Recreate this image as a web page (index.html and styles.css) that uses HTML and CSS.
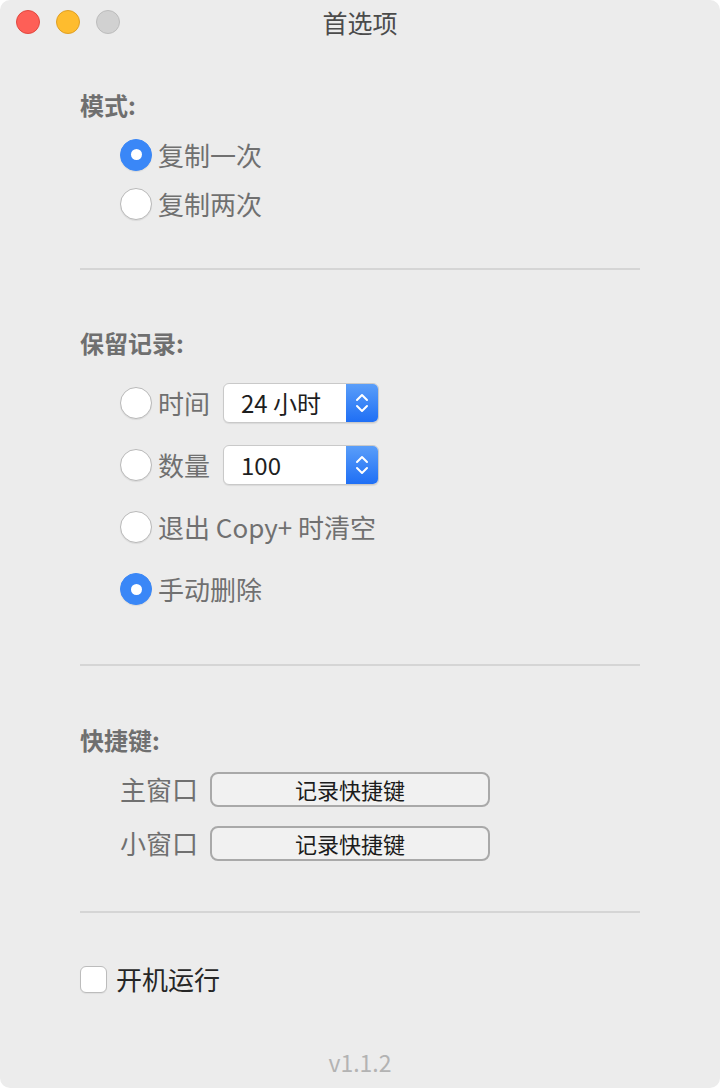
FILE: index.html
```html
<!DOCTYPE html>
<html>
<head>
<meta charset="UTF-8">
<title>首选项</title>
<link rel="stylesheet" href="styles.css">
</head>
<body>

<div class="window">
  <div class="titlebar">
    <div class="lights">
      <span class="light red"></span>
      <span class="light yellow"></span>
      <span class="light gray"></span>
    </div>
    <div class="title">首选项</div>
    <div></div>
  </div>

  <div class="content">
    <div class="section mode">
      <div class="heading">模式:</div>
      <div class="radio-row"><span class="radio on"></span><span class="label">复制一次</span></div>
      <div class="radio-row"><span class="radio"></span><span class="label">复制两次</span></div>
    </div>

    <div class="sep"></div>

    <div class="section keep">
      <div class="heading">保留记录:</div>
      <div class="radio-row tall">
        <span class="radio"></span><span class="label">时间</span>
        <div class="select"><span class="value">24 小时</span><span class="stepper"><svg width="16" height="22" viewBox="0 0 16 22"><path d="M3 8 L8 3 L13 8" /><path d="M3 14 L8 19 L13 14" /></svg></span></div>
      </div>
      <div class="radio-row tall">
        <span class="radio"></span><span class="label">数量</span>
        <div class="select"><span class="value">100</span><span class="stepper"><svg width="16" height="22" viewBox="0 0 16 22"><path d="M3 8 L8 3 L13 8" /><path d="M3 14 L8 19 L13 14" /></svg></span></div>
      </div>
      <div class="radio-row tall"><span class="radio"></span><span class="label">退出 Copy+ 时清空</span></div>
      <div class="radio-row tall"><span class="radio on"></span><span class="label">手动删除</span></div>
    </div>

    <div class="sep sep2"></div>

    <div class="section keys">
      <div class="heading">快捷键:</div>
      <div class="key-row"><span class="label">主窗口</span><button class="record">记录快捷键</button></div>
      <div class="key-row"><span class="label">小窗口</span><button class="record">记录快捷键</button></div>
    </div>

    <div class="sep sep3"></div>

    <div class="check-row"><span class="checkbox"></span><span class="check-label">开机运行</span></div>
  </div>

  <div class="version">v1.1.2</div>
</div>

</body>
</html>
```

FILE: styles.css
```css
body {
  margin: 0;
  background-color: #ffffff;
  font-family: "Noto Sans CJK SC", "Noto Sans", sans-serif;
}
.window {
  width: 720px;
  height: 1088px;
  background-color: #ececec;
  border-radius: 10px;
  overflow: hidden;
  display: flex;
  flex-direction: column;
}
.titlebar {
  height: 44px;
  display: grid;
  grid-template-columns: 1fr auto 1fr;
  align-items: center;
}
.lights {
  display: flex;
  gap: 16px;
  padding-left: 16px;
}
.light {
  width: 22px;
  height: 22px;
  border-radius: 50%;
  border: 1px solid transparent;
}
.red {
  background-color: #fe5f57;
  border-color: #e1483f;
}
.yellow {
  background-color: #febc2e;
  border-color: #df9f24;
}
.gray {
  background-color: #d1d1d1;
  border-color: #bcbcbc;
}
.title {
  font-size: 25px;
  line-height: 32px;
  color: #4b4b4b;
}
.content {
  padding: 0 80px;
}
.heading {
  font-size: 24px;
  font-weight: bold;
  line-height: 32px;
  color: #6f6f6f;
}
.mode {
  padding-top: 45px;
}
.mode .heading {
  margin-bottom: 9px;
}
.radio-row {
  height: 49px;
  display: flex;
  align-items: center;
  padding-left: 40px;
}
.radio-row.tall {
  height: 62px;
}
.radio {
  width: 32px;
  height: 32px;
  box-sizing: border-box;
  border-radius: 50%;
  background-color: #ffffff;
  border: 1px solid #b9b9b9;
  box-shadow: 0 1px 1px rgba(0, 0, 0, 0.08);
  display: flex;
  align-items: center;
  justify-content: center;
  margin-right: 6px;
  flex-shrink: 0;
}
.radio.on {
  background-color: #3a87f7;
  border-color: #3a87f7;
}
.radio.on::after {
  content: "";
  width: 11px;
  height: 11px;
  border-radius: 50%;
  background-color: #ffffff;
}
.label {
  font-size: 26px;
  line-height: 34px;
  color: #707070;
}
.sep {
  height: 2px;
  background-color: #d5d5d5;
  margin-top: 40px;
}
.keep {
  padding-top: 57px;
}
.keep .heading {
  margin-bottom: 13px;
}
.select {
  margin-left: 13px;
  width: 156px;
  height: 40px;
  box-sizing: border-box;
  border: 1px solid #c9c9c9;
  border-radius: 6px;
  background-color: #ffffff;
  display: flex;
  align-items: stretch;
  overflow: hidden;
  box-shadow: 0 1px 1px rgba(0, 0, 0, 0.08);
}
.value {
  flex: 1;
  font-size: 24px;
  line-height: 38px;
  color: #1e1e1e;
  padding-left: 17px;
}
.stepper {
  width: 32px;
  background: linear-gradient(#5a9ef9, #1f6ff5);
  display: flex;
  align-items: center;
  justify-content: center;
}
.stepper path {
  fill: none;
  stroke: #ffffff;
  stroke-width: 2;
  stroke-linecap: round;
  stroke-linejoin: round;
}
.sep2 {
  margin-top: 44px;
}
.keys {
  padding-top: 58px;
}
.keys .heading {
  margin-bottom: 6px;
}
.key-row {
  height: 54px;
  display: flex;
  align-items: center;
  padding-left: 40px;
}
.key-row .label {
  width: 90px;
}
.record {
  width: 280px;
  height: 35px;
  box-sizing: border-box;
  border: 2px solid #a9a9a9;
  border-radius: 8px;
  background-color: #f1f1f1;
  font-family: "Noto Sans CJK SC", sans-serif;
  font-size: 22px;
  line-height: 29px;
  color: #1c1c1c;
  padding: 0;
}
.sep3 {
  margin-top: 41px;
}
.check-row {
  margin-top: 46px;
  height: 40px;
  display: flex;
  align-items: center;
}
.checkbox {
  width: 27px;
  height: 27px;
  box-sizing: border-box;
  border: 1px solid #bcbcbc;
  border-radius: 6px;
  background-color: #ffffff;
  box-shadow: 0 1px 1px rgba(0, 0, 0, 0.06);
  margin-right: 9px;
}
.check-label {
  font-size: 26px;
  line-height: 34px;
  color: #262626;
}
.version {
  margin-top: auto;
  margin-bottom: 10px;
  text-align: center;
  font-size: 23px;
  line-height: 32px;
  color: #b3b3b3;
}
```
